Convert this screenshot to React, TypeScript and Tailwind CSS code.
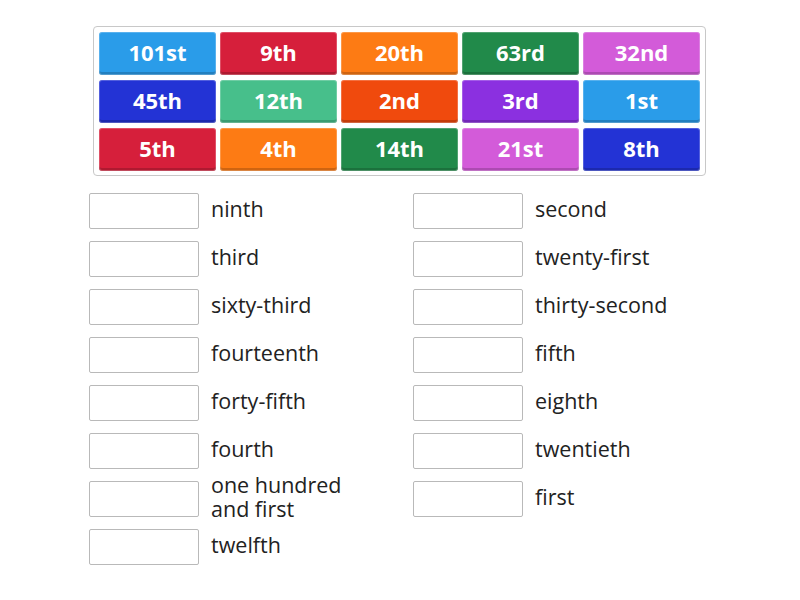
import React from 'react';

interface Tile {
  label: string;
  color: string;
}

const tiles: Tile[] = [
  { label: '101st', color: 'bg-[#2a9ce9]' },
  { label: '9th', color: 'bg-[#d61f3b]' },
  { label: '20th', color: 'bg-[#fd7b14]' },
  { label: '63rd', color: 'bg-[#218a4a]' },
  { label: '32nd', color: 'bg-[#d35bd9]' },
  { label: '45th', color: 'bg-[#2333d5]' },
  { label: '12th', color: 'bg-[#47bf8b]' },
  { label: '2nd', color: 'bg-[#f04a0d]' },
  { label: '3rd', color: 'bg-[#8b30e0]' },
  { label: '1st', color: 'bg-[#2a9ce9]' },
  { label: '5th', color: 'bg-[#d61f3b]' },
  { label: '4th', color: 'bg-[#fd7b14]' },
  { label: '14th', color: 'bg-[#218a4a]' },
  { label: '21st', color: 'bg-[#d35bd9]' },
  { label: '8th', color: 'bg-[#2333d5]' },
];

const leftWords = [
  'ninth',
  'third',
  'sixty-third',
  'fourteenth',
  'forty-fifth',
  'fourth',
  'one hundred and first',
  'twelfth',
];

const rightWords = [
  'second',
  'twenty-first',
  'thirty-second',
  'fifth',
  'eighth',
  'twentieth',
  'first',
];

const AnswerRow: React.FC<{ word: string }> = ({ word }) => (
  <div className="flex items-center h-9 gap-3">
    <div className="w-[110px] h-9 shrink-0 bg-white border border-[#b9b9b9] rounded-[2px]" />
    <span className="w-[170px] pb-[5px] text-[21.5px] leading-[24px] text-[#222]">{word}</span>
  </div>
);

export default function App() {
  return (
    <div className="w-[800px] h-[600px] bg-white font-['Open_Sans',sans-serif]">
      <div className="pt-[26px] pl-[93px]">
        <div className="w-[613px] pt-[5px] px-[5px] pb-[4px] border border-[#c8c8c8] rounded-[4px] grid grid-cols-5 gap-x-[4px] gap-y-[5px]">
          {tiles.map((t, i) => (
            <div
              key={i}
              className={`${t.color} h-[43px] rounded-[3px] flex items-center justify-center pb-[3px] text-white font-bold text-[22px] shadow-[inset_0_0_0_1px_rgba(255,255,255,0.22),inset_0_-3px_0_rgba(0,0,0,0.18)]`}
            >
              {t.label}
            </div>
          ))}
        </div>
      </div>
      <div className="flex pl-[89px] pt-[17px]">
        <div className="w-[324px] flex flex-col gap-3">
          {leftWords.map((w) => (
            <AnswerRow key={w} word={w} />
          ))}
        </div>
        <div className="w-[324px] flex flex-col gap-3">
          {rightWords.map((w) => (
            <AnswerRow key={w} word={w} />
          ))}
        </div>
      </div>
    </div>
  );
}
